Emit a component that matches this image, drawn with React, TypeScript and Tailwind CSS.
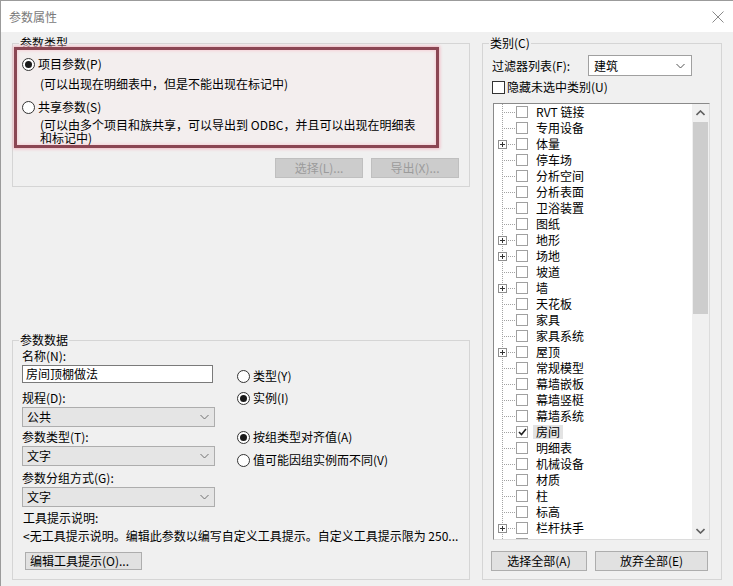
import React from 'react';

const treeItems: { label: string; plus?: boolean; checked?: boolean }[] = [
  { label: 'RVT 链接' },
  { label: '专用设备' },
  { label: '体量', plus: true },
  { label: '停车场' },
  { label: '分析空间' },
  { label: '分析表面' },
  { label: '卫浴装置' },
  { label: '图纸' },
  { label: '地形', plus: true },
  { label: '场地', plus: true },
  { label: '坡道' },
  { label: '墙', plus: true },
  { label: '天花板' },
  { label: '家具' },
  { label: '家具系统' },
  { label: '屋顶', plus: true },
  { label: '常规模型' },
  { label: '幕墙嵌板' },
  { label: '幕墙竖梃' },
  { label: '幕墙系统' },
  { label: '房间', checked: true },
  { label: '明细表' },
  { label: '机械设备' },
  { label: '材质' },
  { label: '柱' },
  { label: '标高' },
  { label: '栏杆扶手', plus: true },
  { label: '', plus: true }
];

function Chevron({ up = false, color = '#606060', width = 1 }: { up?: boolean; color?: string; width?: number }) {
  return (
    <svg width="9" height="6" viewBox="0 0 9 6" className="shrink-0">
      <polyline
        points={up ? '0.5,5 4.5,1 8.5,5' : '0.5,1 4.5,5 8.5,1'}
        fill="none"
        stroke={color}
        strokeWidth={width}
      />
    </svg>
  );
}

function Radio({ checked = false }: { checked?: boolean }) {
  return (
    <span className="flex h-[13px] w-[13px] shrink-0 items-center justify-center rounded-full border border-[#333333] bg-white">
      {checked && <span className="h-[7px] w-[7px] rounded-full bg-[#1a1a1a]" />}
    </span>
  );
}

function RadioRow({ checked, label, className = '' }: { checked?: boolean; label: string; className?: string }) {
  return (
    <div className={`flex h-[16px] items-center gap-[3px] ${className}`}>
      <Radio checked={checked} />
      <span className="whitespace-nowrap">{label}</span>
    </div>
  );
}

function GraySelect({ value }: { value: string }) {
  return (
    <div className="flex h-[20px] w-[193px] items-center justify-between border border-[#adadad] bg-[#e5e5e5] pl-[4px] pr-[5px]">
      <span>{value}</span>
      <Chevron color="#707070" />
    </div>
  );
}

function Button({ label, disabled = false, className = '' }: { label: string; disabled?: boolean; className?: string }) {
  return (
    <div
      className={`flex h-[20px] items-center justify-center border whitespace-nowrap ${
        disabled ? 'border-[#bfbfbf] bg-[#cccccc] text-[#9b9b9b]' : 'border-[#adadad] bg-[#e1e1e1] text-black'
      } ${className}`}
    >
      {label}
    </div>
  );
}

function TreeLines({ plus }: { plus?: boolean }) {
  return (
    <svg width="22" height="16" className="shrink-0">
      <line x1="8.5" y1="0" x2="8.5" y2="16" stroke="#a3a3a3" strokeDasharray="1 1" />
      <line x1="10" y1="8.5" x2="21" y2="8.5" stroke="#a3a3a3" strokeDasharray="1 1" />
      {plus && (
        <>
          <rect x="4.5" y="4.5" width="8" height="8" fill="#ffffff" stroke="#8f8f8f" />
          <line x1="6" y1="8.5" x2="11" y2="8.5" stroke="#333333" />
          <line x1="8.5" y1="6" x2="8.5" y2="11" stroke="#333333" />
        </>
      )}
    </svg>
  );
}

function TreeRow({ label, plus, checked }: { label: string; plus?: boolean; checked?: boolean }) {
  return (
    <div className="flex h-[16px] shrink-0 items-center">
      <TreeLines plus={plus} />
      <span className="flex h-[12px] w-[12px] shrink-0 items-center justify-center border border-[#a0a0a0] bg-white">
        {checked && (
          <svg width="9" height="8" viewBox="0 0 9 8">
            <polyline points="1,4 3.5,6.5 8,1" fill="none" stroke="#222222" strokeWidth="1.6" />
          </svg>
        )}
      </span>
      {label && (
        <span
          className={`ml-[5px] h-[14px] whitespace-nowrap px-[3px] leading-[14px] ${checked ? 'bg-[#e3e3e3]' : ''}`}
        >
          {label}
        </span>
      )}
    </div>
  );
}

export default function App() {
  return (
    <div className="flex h-[586px] w-[733px] flex-col overflow-hidden border-l border-t border-[#9b9b9b] bg-[#f0f0f0] font-['Noto_Sans_CJK_SC',sans-serif] text-[12px] leading-[16px] text-black">
      {/* title bar */}
      <div className="flex h-[31px] shrink-0 items-center justify-between bg-white pl-[8px] pr-[9px]">
        <span className="text-[12px] text-[#7a7a7a]">参数属性</span>
        <svg width="12" height="12" viewBox="0 0 12 12">
          <line x1="0.5" y1="0.5" x2="11.5" y2="11.5" stroke="#8a8a8a" strokeWidth="1" />
          <line x1="11.5" y1="0.5" x2="0.5" y2="11.5" stroke="#8a8a8a" strokeWidth="1" />
        </svg>
      </div>

      <div className="flex gap-[12px] pl-[11px] pt-[3px]">
        {/* left column */}
        <div className="flex w-[458px] flex-col">
          <fieldset className="border border-[#d5d5d5] pb-[8px]">
            <legend className="ml-[6px] px-[1px] leading-[16px]">参数类型</legend>
            <div className="relative -mt-[4px] ml-[1px] flex w-[425px] flex-col border-[3px] border-[#8b4653] bg-[#f3eeee] pb-[1px] pl-[5px] shadow-[0_0_3px_1px_#f2b8c2,inset_0_0_3px_1px_#f6d2d8]">
              <RadioRow checked label="项目参数(P)" className="mt-[6px]" />
              <div className="mt-[4px] h-[16px] whitespace-nowrap pl-[18px]">(可以出现在明细表中，但是不能出现在标记中)</div>
              <RadioRow label="共享参数(S)" className="mt-[7px]" />
              <div className="mt-[3px] whitespace-nowrap pl-[18px] leading-[13px]">
                (可以由多个项目和族共享，可以导出到 ODBC，并且可以出现在明细表
                <br />
                和标记中)
              </div>
            </div>
            <div className="mt-[10px] flex justify-end gap-[8px] pr-[10px]">
              <Button label="选择(L)..." disabled className="w-[88px]" />
              <Button label="导出(X)..." disabled className="w-[88px]" />
            </div>
          </fieldset>

          <fieldset className="mt-[146px] border border-[#d5d5d5] pb-[9px] pl-[9px]">
            <legend className="-ml-[3px] px-[1px] leading-[14px]">参数数据</legend>
            <div className="flex">
              <div className="flex w-[193px] flex-col">
                <div className="mt-[2px] h-[14px] leading-[14px]">名称(N):</div>
                <div className="mt-[2px] flex h-[18px] w-[191px] items-center border border-[#7a7a7a] bg-white pl-[3px]">
                  房间顶棚做法
                </div>
                <div className="mt-[7px] h-[16px]">规程(D):</div>
                <div className="mt-[1px]">
                  <GraySelect value="公共" />
                </div>
                <div className="mt-[2px] h-[16px]">参数类型(T):</div>
                <div className="mt-[1px]">
                  <GraySelect value="文字" />
                </div>
                <div className="mt-[4px] h-[16px]">参数分组方式(G):</div>
                <div className="mt-[1px]">
                  <GraySelect value="文字" />
                </div>
              </div>
              <div className="ml-[22px] flex flex-col">
                <RadioRow label="类型(Y)" className="mt-[21px]" />
                <RadioRow checked label="实例(I)" className="mt-[6px]" />
                <RadioRow checked label="按组类型对齐值(A)" className="mt-[23px]" />
                <RadioRow label="值可能因组实例而不同(V)" className="mt-[7px]" />
              </div>
            </div>
            <div className="mt-[3px] h-[16px] pl-[1px]">工具提示说明:</div>
            <div className="mt-[2px] h-[16px] whitespace-nowrap pl-[1px]">
              &lt;无工具提示说明。编辑此参数以编写自定义工具提示。自定义工具提示限为 250...
            </div>
            <Button label="编辑工具提示(O)..." className="ml-[3px] mt-[8px] !h-[18px] w-[117px] !justify-start pl-[4px]" />
          </fieldset>
        </div>

        {/* right column */}
        <fieldset className="flex w-[240px] flex-col border border-[#d5d5d5] pb-[8px] pl-[9px]">
          <legend className="-ml-[3px] px-[1px] leading-[16px]">类别(C)</legend>
          <div className="mt-[4px] flex h-[21px] items-center">
            <span className="w-[96px] whitespace-nowrap">过滤器列表(F):</span>
            <div className="flex h-[21px] w-[104px] items-center justify-between border border-[#a0a0a0] bg-white pl-[5px] pr-[6px]">
              <span>建筑</span>
              <Chevron color="#555555" />
            </div>
          </div>
          <div className="mt-[3px] flex h-[16px] items-center gap-[2px]">
            <span className="h-[13px] w-[13px] shrink-0 border border-[#333333] bg-white" />
            <span className="whitespace-nowrap">隐藏未选中类别(U)</span>
          </div>
          <div className="ml-[1px] mt-[8px] flex h-[437px] w-[217px] overflow-hidden border border-[#8a8a8a] border-b-[#dcdcdc] border-r-[#dcdcdc] bg-white">
            <div className="flex flex-1 flex-col overflow-hidden">
              {treeItems.map((item, i) => (
                <TreeRow key={i} label={item.label} plus={item.plus} checked={item.checked} />
              ))}
            </div>
            <div className="flex w-[17px] shrink-0 flex-col bg-[#f0f0f0]">
              <div className="flex h-[17px] items-center justify-center">
                <Chevron up color="#606060" width={1.6} />
              </div>
              <div className="mx-[1px] mt-[1px] h-[192px] bg-[#cdcdcd]" />
              <div className="mt-auto flex h-[17px] items-center justify-center">
                <Chevron color="#606060" width={1.6} />
              </div>
            </div>
          </div>
          <div className="mt-[11px] flex gap-[8px]">
            <Button label="选择全部(A)" className="-ml-[1px] w-[96px]" />
            <Button label="放弃全部(E)" className="w-[113px]" />
          </div>
        </fieldset>
      </div>
    </div>
  );
}
